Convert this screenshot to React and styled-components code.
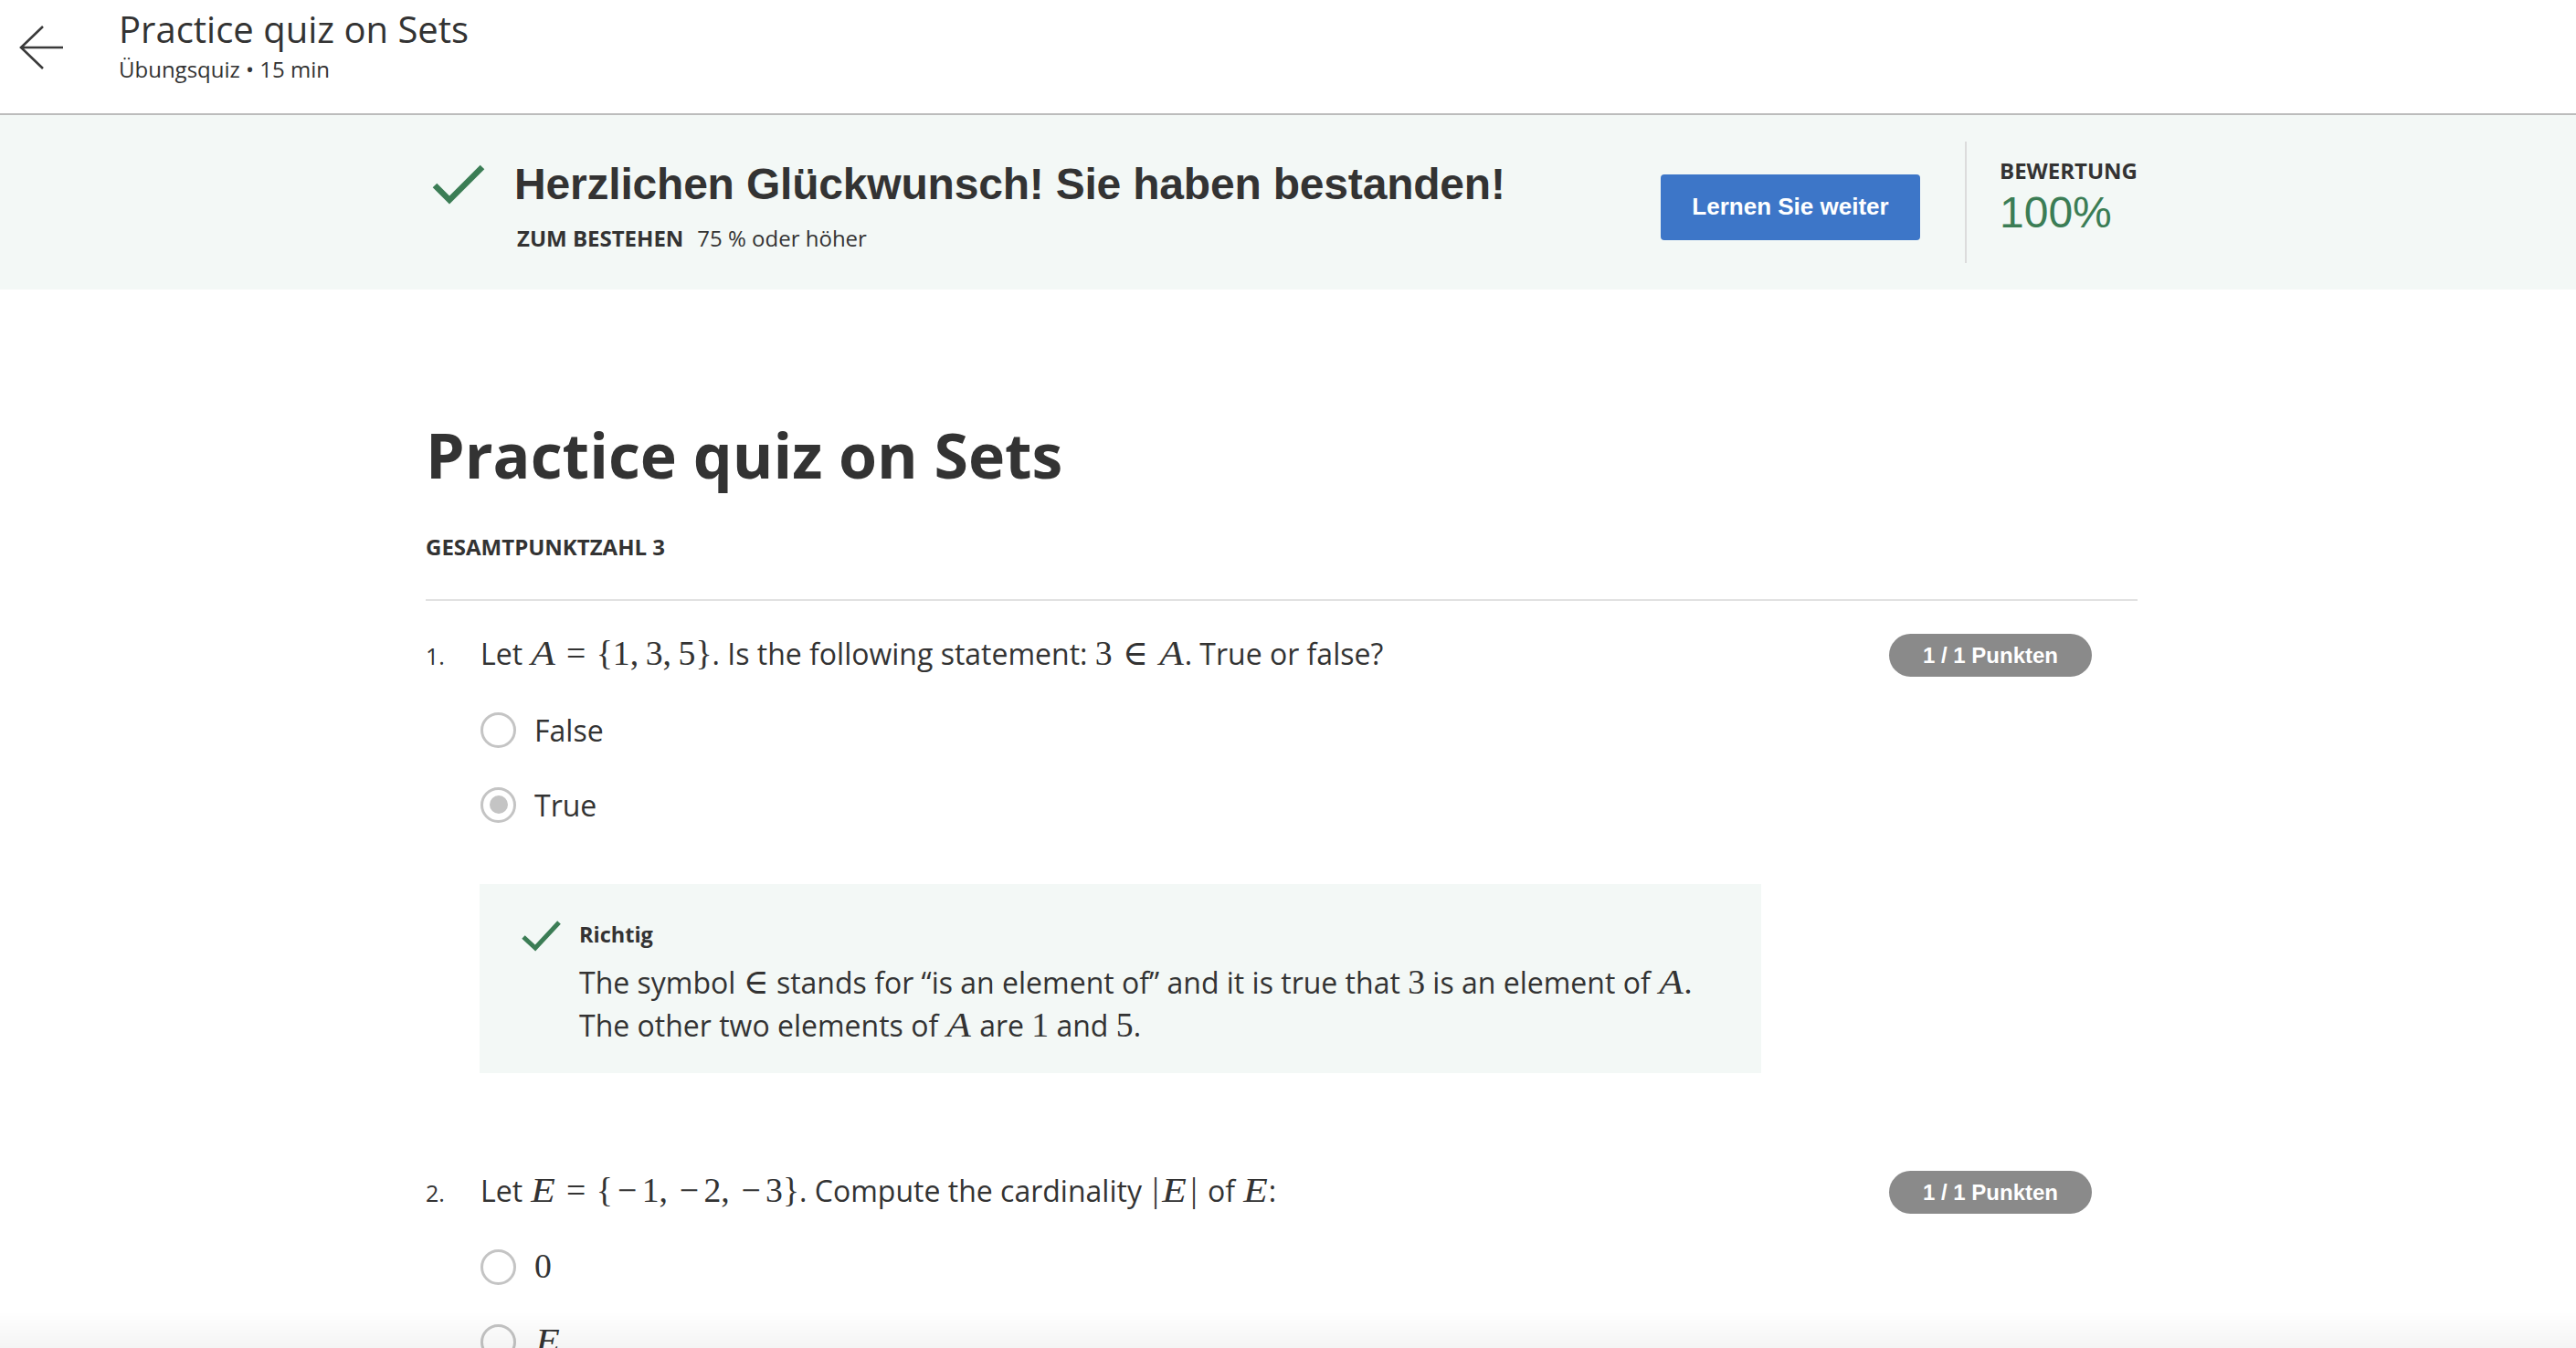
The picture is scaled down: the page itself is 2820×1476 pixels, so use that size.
import React from 'react';
import styled, { createGlobalStyle } from 'styled-components';

const GlobalStyle = createGlobalStyle`
  html, body { margin: 0; padding: 0; overflow: hidden; background: #fff; }
  body { font-family: "Open Sans", "Noto Sans", sans-serif; color: #333; }
  * { box-sizing: border-box; }
`;

const Page = styled.div`
  width: 2820px;
  height: 1476px;
  overflow: hidden;
  position: relative;
`;

const Header = styled.header`
  height: 126px;
  border-bottom: 2px solid #bcbcbc;
  display: flex;
  align-items: flex-start;
`;

const BackButton = styled.button`
  border: 0;
  background: none;
  width: 130px;
  height: 124px;
  padding: 28px 0 0 21px;
  display: flex;
  align-items: flex-start;
  cursor: pointer;
`;

const HeaderText = styled.div`
  padding-top: 8px;
`;

const HeaderTitle = styled.h1`
  margin: 0;
  font-size: 40px;
  line-height: 48px;
  font-weight: 400;
  color: #333;
`;

const HeaderSub = styled.div`
  margin-top: 4px;
  font-size: 24px;
  line-height: 32px;
  color: #333;
`;

const Container = styled.div`
  width: 1874px;
  margin-left: calc(50% - 944px);
`;

const Banner = styled.section`
  height: 191px;
  background: #f3f8f6;
`;

const BannerInner = styled(Container)`
  height: 100%;
  display: flex;
  align-items: center;
`;

const Summary = styled.div`
  display: grid;
  grid-template-columns: 97px auto;
  grid-template-rows: 56px 32px;
  row-gap: 15px;
  margin-top: 7px;
  margin-right: auto;
`;

const CheckCell = styled.div`
  padding-left: 7px;
  display: flex;
  align-items: center;
`;

const BannerHeading = styled.h2`
  margin: 0;
  font-family: "Liberation Sans", Arial, sans-serif;
  font-weight: 700;
  font-size: 48px;
  line-height: 56px;
  letter-spacing: -0.2px;
  color: #333;
`;

const PassLine = styled.div`
  grid-column: 2;
  padding-left: 3px;
  font-size: 24px;
  line-height: 32px;
  display: flex;
  gap: 15px;
`;

const Strong = styled.span`
  font-weight: 700;
`;

const PrimaryButton = styled.button`
  width: 284px;
  height: 72px;
  border: 0;
  border-radius: 4px;
  background: #3d76c8;
  color: #fff;
  font-family: "Liberation Sans", Arial, sans-serif;
  font-weight: 700;
  font-size: 26px;
  margin-top: 10px;
  cursor: pointer;
`;

const VDivider = styled.div`
  width: 2px;
  height: 133px;
  background: #dcdcdc;
  margin: 0 36px 0 49px;
`;

const Score = styled.div`
  width: 151px;
  display: flex;
  flex-direction: column;
  gap: 4px;
  margin-top: -9px;
`;

const ScoreLabel = styled.div`
  font-size: 24px;
  line-height: 28px;
  font-weight: 700;
  color: #333;
`;

const ScoreValue = styled.div`
  font-family: "Liberation Sans", Arial, sans-serif;
  font-size: 48px;
  line-height: 56px;
  color: #3b7d55;
`;

const Main = styled(Container)`
  padding-top: 137px;
`;

const QuizTitle = styled.h1`
  margin: 0;
  font-size: 68px;
  line-height: 88px;
  font-weight: 700;
  color: #333;
`;

const Meta = styled.div`
  margin-top: 41px;
  font-size: 24px;
  line-height: 32px;
  font-weight: 700;
`;

const Rule = styled.hr`
  margin: 41px 0 0;
  border: 0;
  height: 2px;
  background: #e1e1e1;
`;

const Question = styled.div`
  display: grid;
  grid-template-columns: 60px 1fr auto;
  align-items: baseline;
  margin-top: ${p => p.$top}px;
`;

const QNumber = styled.div`
  font-size: 25px;
`;

const QBody = styled.div``;

const Prompt = styled.div`
  font-size: 32px;
  line-height: 44px;
`;

const Options = styled.div`
  margin-top: 20px;
`;

const OptionRow = styled.label`
  height: 82px;
  display: flex;
  align-items: center;
  font-size: 32px;
  gap: 20px;
`;

const Radio = styled.span`
  width: 39px;
  height: 39px;
  border-radius: 50%;
  border: 3.5px solid #c4c4c4;
  display: flex;
  align-items: center;
  justify-content: center;
  flex: none;
  &::after {
    content: "";
    width: 20px;
    height: 20px;
    border-radius: 50%;
    background: ${p => (p.$checked ? '#c4c4c4' : 'transparent')};
  }
`;

const Badge = styled.span`
  align-self: start;
  display: inline-flex;
  justify-content: center;
  align-items: center;
  width: 222px;
  height: 47px;
  border-radius: 24px;
  background: #8a8a8a;
  color: #fff;
  font-family: "Liberation Sans", Arial, sans-serif;
  font-weight: 700;
  font-size: 24px;
  margin-right: 50px;
`;

const Feedback = styled.div`
  margin-top: 46px;
  width: 1403px;
  margin-left: -1px;
  background: #f3f8f6;
  padding: 39px 40px 29px 45px;
  display: grid;
  grid-template-columns: 64px 1fr;
`;

const FeedbackIcon = styled.div``;

const FeedbackTitle = styled.div`
  font-size: 23.5px;
  line-height: 32px;
  font-weight: 700;
`;

const FeedbackText = styled.div`
  margin-top: 13px;
  font-size: 32px;
  line-height: 47px;
`;

const M = styled.span`
  font-family: "Liberation Serif", "DejaVu Serif", serif;
  font-size: 1.18em;
  line-height: 1;
`;

const V = styled.i`
  font-style: italic;
  display: inline-block;
  transform: scaleX(1.15);
  margin: 0 0.07em;
`;

const Rel = styled.span`
  margin: 0 0.3em;
`;

const Minus = styled.span`
  margin: 0 0.14em;
`;

const Bar = styled.span`
  margin: 0 0.08em;
`;

const BottomFade = styled.div`
  position: fixed;
  left: 0;
  right: 0;
  bottom: 0;
  height: 40px;
  background: linear-gradient(rgba(0,0,0,0), rgba(0,0,0,0.045));
  pointer-events: none;
`;

const ArrowLeft = () => (
  <svg width="50" height="48" viewBox="0 0 50 48" fill="none">
    <path d="M48 24H2M26 1L2 24l24 23" stroke="#3a3a3a" strokeWidth="2.6" strokeLinejoin="miter" />
  </svg>
);

const BigCheck = () => (
  <svg width="58" height="44" viewBox="0 0 58 44" fill="none">
    <path d="M3 23l16 16L55 3" stroke="#3b7d55" strokeWidth="6.5" />
  </svg>
);

const SmallCheck = () => (
  <svg width="46" height="36" viewBox="0 0 46 36" fill="none">
    <path d="M3 19l13 12L42 3" stroke="#3b7d55" strokeWidth="5" />
  </svg>
);

const sp = '\u2009';

export default function App() {
  return (
    <Page>
      <GlobalStyle />
      <Header>
        <BackButton aria-label="Zurück"><ArrowLeft /></BackButton>
        <HeaderText>
          <HeaderTitle>Practice quiz on Sets</HeaderTitle>
          <HeaderSub>Übungsquiz • 15 min</HeaderSub>
        </HeaderText>
      </Header>

      <Banner>
        <BannerInner>
          <Summary>
            <CheckCell><BigCheck /></CheckCell>
            <BannerHeading>Herzlichen Glückwunsch! Sie haben bestanden!</BannerHeading>
            <PassLine>
              <Strong>ZUM BESTEHEN</Strong>
              <span>75 % oder höher</span>
            </PassLine>
          </Summary>
          <PrimaryButton>Lernen Sie weiter</PrimaryButton>
          <VDivider />
          <Score>
            <ScoreLabel>BEWERTUNG</ScoreLabel>
            <ScoreValue>100%</ScoreValue>
          </Score>
        </BannerInner>
      </Banner>

      <Main>
        <QuizTitle>Practice quiz on Sets</QuizTitle>
        <Meta>GESAMTPUNKTZAHL 3</Meta>
        <Rule />

        <Question $top={36}>
          <QNumber>1.</QNumber>
          <QBody>
            <Prompt>
              Let <M><V>A</V><Rel>=</Rel>{'{'}1,{sp}3,{sp}5{'}'}</M>. Is the following statement: <M>3<Rel>∈</Rel><V>A</V></M>. True or false?
            </Prompt>
            <Options>
              <OptionRow><Radio /> False</OptionRow>
              <OptionRow><Radio $checked /> True</OptionRow>
            </Options>
            <Feedback>
              <FeedbackIcon><SmallCheck /></FeedbackIcon>
              <div>
                <FeedbackTitle>Richtig</FeedbackTitle>
                <FeedbackText>
                  <div>The symbol <M>∈</M> stands for “is an element of” and it is true that <M>3</M> is an element of <M><V>A</V>.</M></div>
                  <div>The other two elements of <M><V>A</V></M> are <M>1</M> and <M>5</M>.</div>
                </FeedbackText>
              </div>
            </Feedback>
          </QBody>
          <Badge>1 / 1 Punkten</Badge>
        </Question>

        <Question $top={107}>
          <QNumber>2.</QNumber>
          <QBody>
            <Prompt>
              Let <M><V>E</V><Rel>=</Rel>{'{'}<Minus>−</Minus>1,{sp}<Minus>−</Minus>2,{sp}<Minus>−</Minus>3{'}'}</M>. Compute the cardinality <M><Bar>|</Bar><V>E</V><Bar>|</Bar></M> of <M><V>E</V></M>:
            </Prompt>
            <Options>
              <OptionRow><Radio /> <M>0</M></OptionRow>
              <OptionRow><Radio /> <M><V>E</V></M></OptionRow>
            </Options>
          </QBody>
          <Badge>1 / 1 Punkten</Badge>
        </Question>
      </Main>
      <BottomFade />
    </Page>
  );
}
